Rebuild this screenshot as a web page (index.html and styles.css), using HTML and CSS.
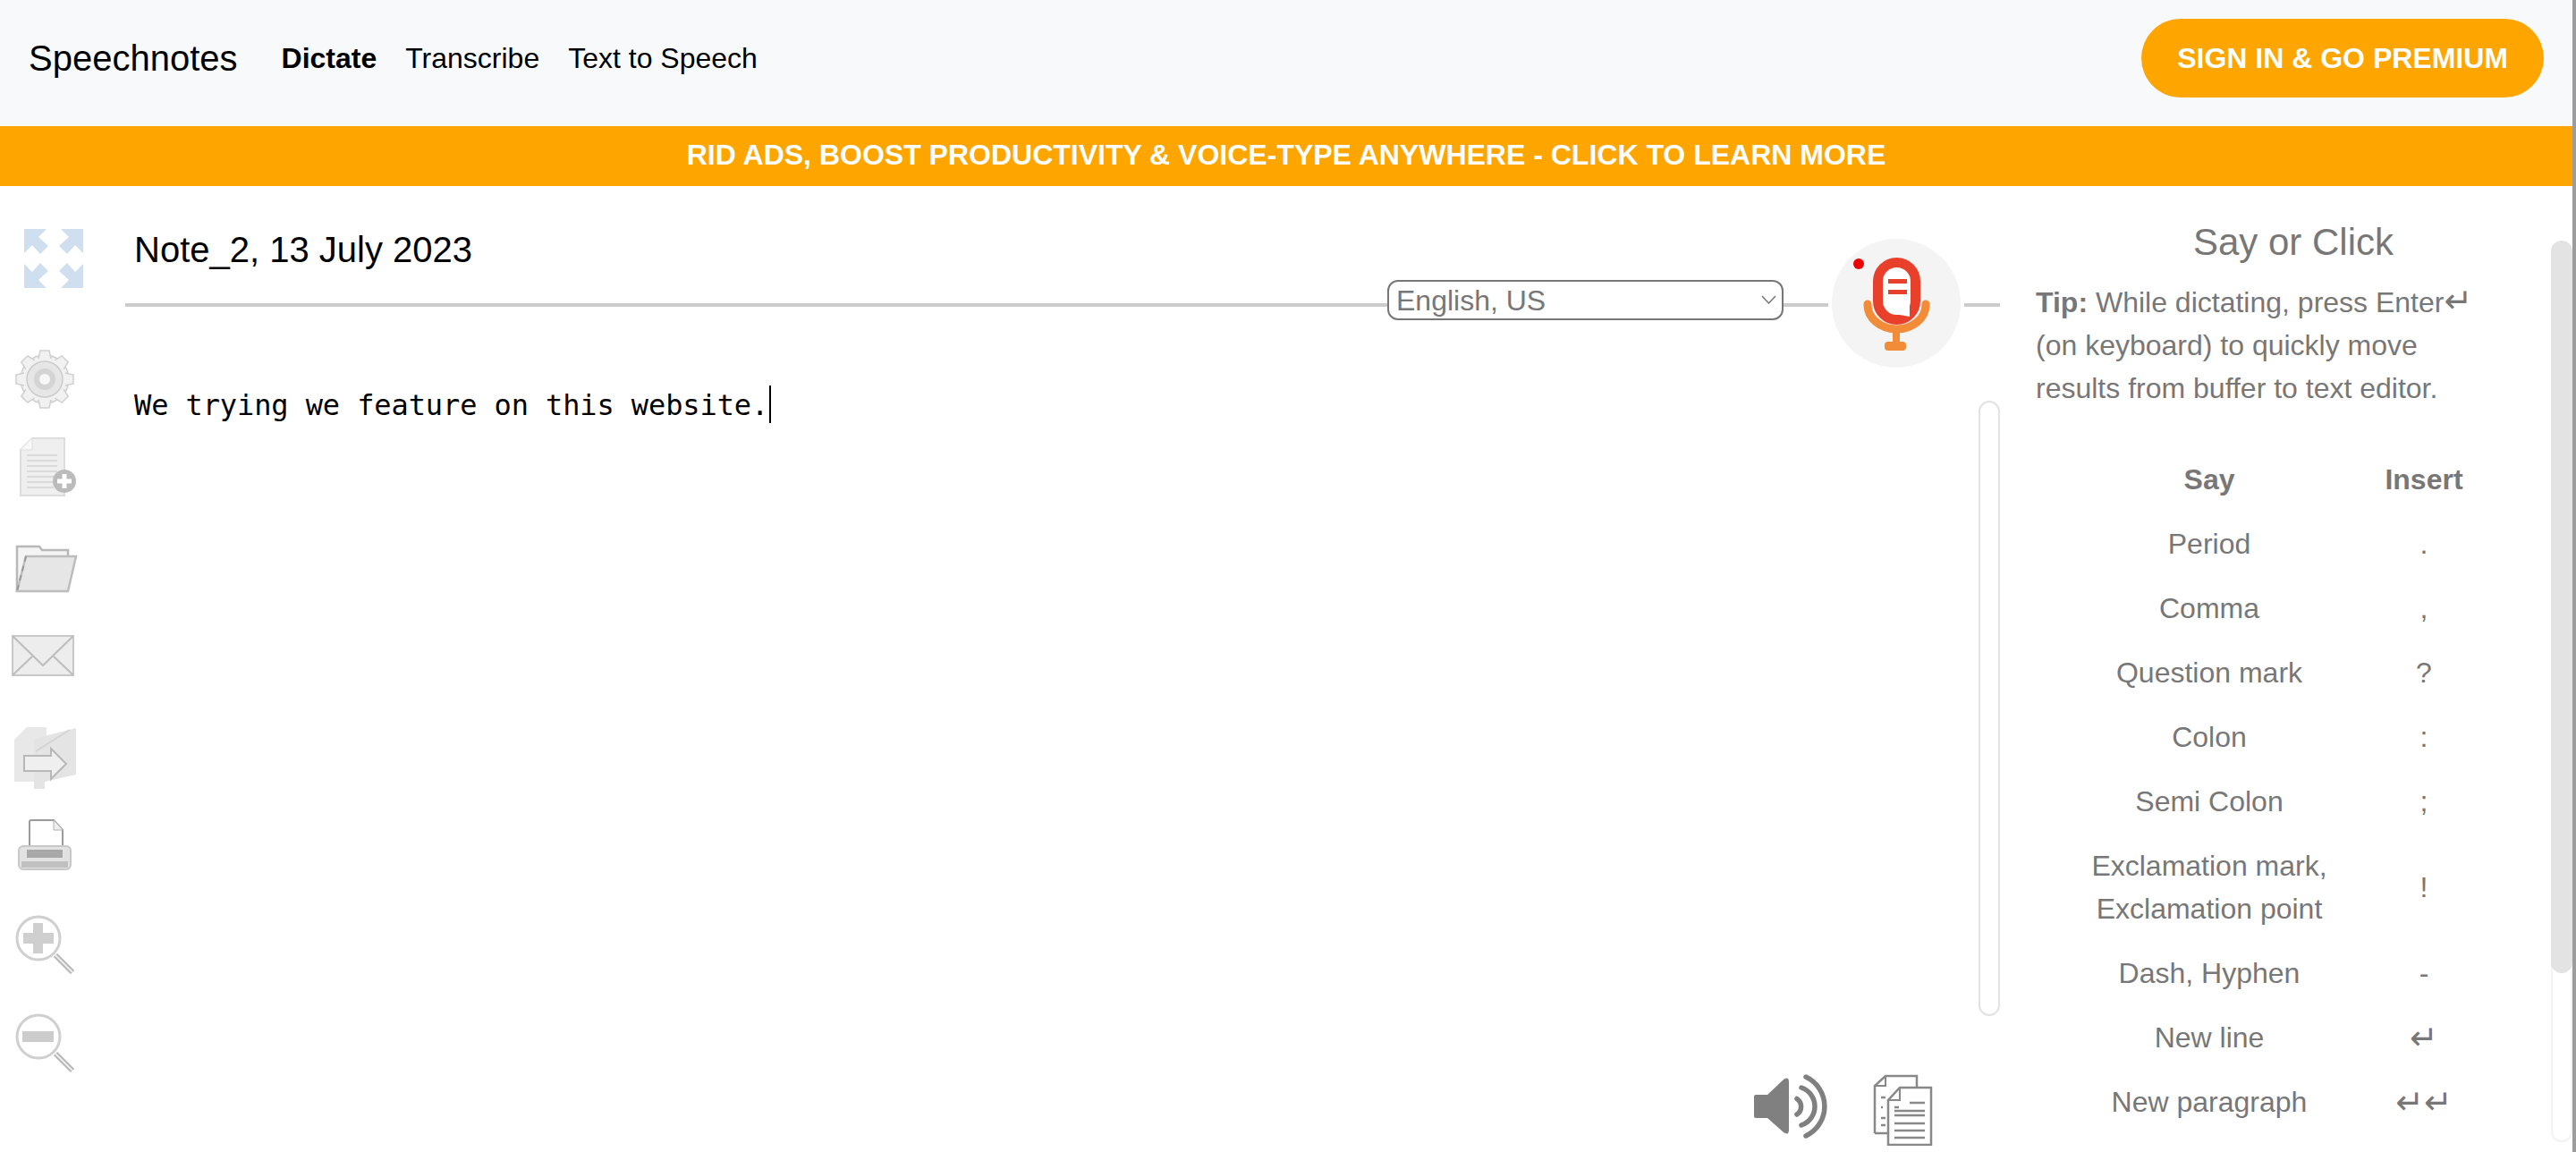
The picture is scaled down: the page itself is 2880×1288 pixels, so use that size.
FILE: index.html
```html
<!DOCTYPE html>
<html>

<head>
  <meta name="viewport" content="width=device-width, initial-scale=1" />
  <link rel="stylesheet" href="styles.css">
  <title>Speechnotes</title>
</head>

<body>
  <div class="page">
    <header class="topbar">
      <div class="brand">Speechnotes</div>
      <nav class="nav">
        <a class="nav-link active">Dictate</a>
        <a class="nav-link">Transcribe</a>
        <a class="nav-link">Text to Speech</a>
      </nav>
      <a class="signin">SIGN IN &amp; GO PREMIUM</a>
    </header>

    <div class="promo">RID ADS, BOOST PRODUCTIVITY &amp; VOICE-TYPE ANYWHERE - CLICK TO LEARN MORE</div>

    <div class="workspace">
      <!-- Left toolbar -->
      <aside class="tools">
        <svg class="tool-expand" width="100" height="66" viewBox="0 0 100 66">
          <defs>
            <polygon id="expand-arrow" points="27,0 52,0 43,9 54,19 45,28 36,18 27,27" fill="#cfdff0" />
          </defs>
          <use href="#expand-arrow" />
          <use href="#expand-arrow" transform="matrix(-1 0 0 1 120 0)" />
          <use href="#expand-arrow" transform="matrix(1 0 0 -1 0 66)" />
          <use href="#expand-arrow" transform="matrix(-1 0 0 -1 120 66)" />
        </svg>

        <svg class="tool tool-gear" width="100" height="66" viewBox="0 0 100 66">
          <defs>
            <path id="gear-tooth" d="M43 10 L45 1 L55 1 L57 10" fill="#f1f1f1" stroke="#cfcfcf" stroke-width="1.5" />
          </defs>
          <circle cx="50" cy="33" r="27" fill="#f1f1f1" stroke="#cfcfcf" stroke-width="1.5" />
          <use href="#gear-tooth" />
          <use href="#gear-tooth" transform="rotate(45 50 33)" />
          <use href="#gear-tooth" transform="rotate(90 50 33)" />
          <use href="#gear-tooth" transform="rotate(135 50 33)" />
          <use href="#gear-tooth" transform="rotate(180 50 33)" />
          <use href="#gear-tooth" transform="rotate(225 50 33)" />
          <use href="#gear-tooth" transform="rotate(270 50 33)" />
          <use href="#gear-tooth" transform="rotate(315 50 33)" />
          <circle cx="50" cy="33" r="20" fill="#e6e6e6" stroke="#cccccc" stroke-width="1.5" />
          <circle cx="50" cy="33" r="12" fill="#d4d4d4" />
          <circle cx="50" cy="33" r="6" fill="#f7f7f7" />
        </svg>

        <svg class="tool tool-doc" width="100" height="67" viewBox="0 0 100 67">
          <path d="M23 14 L36 1 H72 V65 H23 Z" fill="#efefef" stroke="#dddddd" stroke-width="2" />
          <path d="M23 14 H36 V1" fill="#f8f8f8" stroke="#dddddd" />
          <path d="M30 20 H64 M30 26 H64 M30 32 H64 M30 38 H64 M30 44 H60 M30 50 H60 M30 56 H60" stroke="#d4d4d4" stroke-width="1.5" />
          <circle cx="72" cy="49" r="13" fill="#bbbbbb" />
          <path d="M72 41 V57 M64 49 H80" stroke="#ffffff" stroke-width="5" />
        </svg>

        <svg class="tool tool-folder" width="100" height="56" viewBox="0 0 100 56">
          <path d="M19 55 V4 H44 L47 8 H76 V18" fill="#f4f4f4" stroke="#b8b8b8" stroke-width="2.5" />
          <path d="M29 15 H85 L76 54 H19 Z" fill="#e6e6e6" stroke="#bdbdbd" stroke-width="2.5" />
          <path d="M29 15 L19 54" stroke="#999999" stroke-width="2" stroke-dasharray="6 5" />
        </svg>

        <svg class="tool tool-mail" width="100" height="46" viewBox="0 0 100 46">
          <rect x="14" y="1" width="68" height="44" fill="#ededed" stroke="#c8c8c8" stroke-width="2" />
          <path d="M14 1 L48 34 L82 1 M14 45 L37 23 M82 45 L59 23" fill="none" stroke="#bdbdbd" stroke-width="2" />
        </svg>

        <svg class="tool tool-share" width="100" height="70" viewBox="0 0 100 70">
          <path d="M16 15 L30 1 H52 V62 H16 Z" fill="#e8e8e8" />
          <path d="M38 14 L85 2 V54 L50 62 V70 H38 Z" fill="#e4e4e4" />
          <path d="M40 28 L78 4" stroke="#d4d4d4" stroke-width="2" />
          <path d="M27 33 H57 V25 L74 42 L57 59 V50 H27 Z" fill="#efefef" stroke="#b8b8b8" stroke-width="2" />
        </svg>

        <svg class="tool tool-print" width="100" height="57" viewBox="0 0 100 57">
          <path d="M33 31 V3 Q33 1 35 1 H60 L70 12 V31" fill="#ffffff" stroke="#9a9a9a" stroke-width="2" />
          <path d="M60 1 V12 H70" fill="#eeeeee" stroke="#b0b0b0" />
          <rect x="21" y="30" width="58" height="26" rx="5" fill="#e2e2e2" stroke="#c8c8c8" stroke-width="2" />
          <rect x="30" y="34" width="40" height="9" fill="#a8a8a8" />
          <rect x="24" y="47" width="52" height="7" fill="#c0c0c0" />
        </svg>

        <svg class="tool tool-zoomin" width="100" height="66" viewBox="0 0 100 66">
          <path d="M62 45 L81 64" stroke="#b5b5b5" stroke-width="6" />
          <path d="M62 45 L81 64" stroke="#eeeeee" stroke-width="2" />
          <circle cx="43" cy="26" r="24" fill="#ffffff" stroke="#cfcfcf" stroke-width="3" />
          <path d="M37 9 H48 V20 H60 V32 H48 V43 H37 V32 H26 V20 H37 Z" fill="#cfcfcf" />
        </svg>

        <svg class="tool tool-zoomout" width="100" height="67" viewBox="0 0 100 67">
          <path d="M62 45 L81 64" stroke="#b5b5b5" stroke-width="6" />
          <path d="M62 45 L81 64" stroke="#eeeeee" stroke-width="2" />
          <circle cx="43" cy="26" r="24" fill="#ffffff" stroke="#cfcfcf" stroke-width="3" />
          <rect x="25" y="20" width="35" height="12" fill="#cccccc" />
        </svg>
      </aside>

      <!-- Note title, language and mic -->
      <main class="note">
        <div class="note-head">
          <div class="note-title">Note_2, 13 July 2023</div>
          <div class="rule-row">
            <div class="rule rule-grow"></div>
            <div class="lang">
              <select class="lang-select">
                <option>English, US</option>
              </select>
              <svg class="lang-chevron" width="17" height="10" viewBox="0 0 17 10">
                <path d="M1 1 L8.5 9 L16 1" fill="none" stroke="#777" stroke-width="1.5" />
              </svg>
            </div>
            <div class="rule rule-mid"></div>
            <div class="mic">
              <svg width="144" height="144" viewBox="0 0 144 144">
                <circle cx="30" cy="28" r="6" fill="#ee0000" />
                <path d="M40 73 V74 A32.5 27 0 0 0 105 74 V73" fill="none" stroke="#f28c38" stroke-width="9" stroke-linecap="round" />
                <path d="M72 104 V118" stroke="#f28c38" stroke-width="8" />
                <rect x="59" y="115" width="24" height="10" rx="4" fill="#f28c38" />
                <rect x="51.5" y="26.5" width="42" height="64" rx="21" fill="#ffffff" stroke="#e8402a" stroke-width="11" />
                <path d="M63 47.5 H84 M63 59.5 H84" stroke="#e8402a" stroke-width="5" />
                <path d="M87 70 V87 L70 84 Z" fill="#ffffff" />
              </svg>
            </div>
            <div class="rule rule-end"></div>
          </div>
        </div>

        <div class="editor-row">
          <div class="editor">We trying we feature on this website.<span class="caret"></span></div>
          <div class="editor-track"></div>
        </div>

        <div class="actions">
          <svg width="86" height="72" viewBox="0 0 86 72">
            <path d="M0 25 Q0 23 2 23 H15 L33 6 Q39 2 39 9 V62 Q39 69 33 65 L15 49 H2 Q0 49 0 47 Z" fill="#808080" />
            <path d="M48 27.5 A10.6 10.6 0 0 1 48 45" fill="none" stroke="#808080" stroke-width="5.5" stroke-linecap="round" />
            <path d="M53 15 A22.2 22.2 0 0 1 53 57" fill="none" stroke="#808080" stroke-width="5.5" stroke-linecap="round" />
            <path d="M58 3 A36.5 36.5 0 0 1 58 69" fill="none" stroke="#808080" stroke-width="5.5" stroke-linecap="round" />
          </svg>
          <svg width="67" height="80" viewBox="0 0 67 80">
            <path d="M2 66 V13 L14 2 H49 V15" fill="#ffffff" stroke="#888888" stroke-width="2.5" />
            <path d="M2 13 H14 V2" fill="none" stroke="#888888" stroke-width="2" />
            <path d="M2 66 H17" stroke="#888888" stroke-width="2.5" />
            <path d="M9 26 H14 M9 37 H11 M9 49 H14 M9 57 H14" stroke="#888888" stroke-width="2.5" />
            <path d="M17 79 V29 L30 15 H65 V79 Z" fill="#ffffff" stroke="#888888" stroke-width="2.5" />
            <path d="M17 29 H30 V15" fill="none" stroke="#888888" stroke-width="2" />
            <path d="M41 32 H58 M24 37 H29 M24 41 H58 M24 46 H58 M24 55 H58 M24 63 H58 M24 71 H58" stroke="#888888" stroke-width="2.5" />
          </svg>
        </div>
      </main>

      <!-- Voice commands -->
      <section class="panel">
        <div class="panel-body">
          <h2 class="panel-title">Say or Click</h2>
          <p class="tip"><b>Tip:</b> While dictating, press Enter<span class="enter">↵</span> (on keyboard) to quickly move results from buffer to text editor.</p>
          <table class="commands">
            <tr>
              <th class="col-say">Say</th>
              <th class="col-insert">Insert</th>
            </tr>
            <tr><td>Period</td><td>.</td></tr>
            <tr><td>Comma</td><td>,</td></tr>
            <tr><td>Question mark</td><td>?</td></tr>
            <tr><td>Colon</td><td>:</td></tr>
            <tr><td>Semi Colon</td><td>;</td></tr>
            <tr><td>Exclamation mark,<br>Exclamation point</td><td>!</td></tr>
            <tr><td>Dash, Hyphen</td><td>-</td></tr>
            <tr><td>New line</td><td class="enter">↵</td></tr>
            <tr><td>New paragraph</td><td class="enter">↵↵</td></tr>
          </table>
        </div>
        <div class="panel-track">
          <div class="panel-thumb"></div>
        </div>
      </section>
    </div>
  </div>
</body>

</html>
```

FILE: styles.css
```css
html,
body {
  margin: 0;
  height: 100%;
  overflow: hidden;
}

body {
  font-family: "Liberation Sans", Arial, sans-serif;
  background-color: white;
}

.page {
  height: 1288px;
  overflow: hidden;
  border-right: 4px solid #9c9c9c;
}

/* Top bar */
.topbar {
  display: flex;
  align-items: center;
  box-sizing: border-box;
  height: 141px;
  padding: 21px 32px 32px 32px;
  background-color: #f8f9fa;
}

.brand {
  font-size: 40px;
  color: black;
}

.nav {
  display: flex;
  gap: 32px;
  margin-left: 49px;
}

.nav-link {
  font-size: 32px;
  color: black;
}

.nav-link.active {
  font-weight: bold;
}

.signin {
  margin-left: auto;
  padding: 0 40px;
  height: 88px;
  line-height: 88px;
  border-radius: 44px;
  background-color: #ffa500;
  color: white;
  font-size: 32px;
  font-weight: bold;
}

.promo {
  height: 67px;
  line-height: 65px;
  background-color: #ffa500;
  color: white;
  font-size: 32px;
  font-weight: bold;
  text-align: center;
}

/* Main area */
.workspace {
  display: grid;
  grid-template-columns: 140px 2096px 640px;
  height: 1080px;
}

/* Left toolbar */
.tools svg {
  display: block;
}

.tool {
  filter: blur(0.6px);
}

.tool-expand {
  margin-top: 48px;
}

.tool-gear {
  margin-top: 69px;
}

.tool-doc {
  margin-top: 32px;
}

.tool-folder {
  margin-top: 51px;
}

.tool-mail {
  margin-top: 47px;
}

.tool-share {
  margin-top: 56px;
}

.tool-print {
  margin-top: 34px;
}

.tool-zoomin {
  margin-top: 50px;
}

.tool-zoomout {
  margin-top: 44px;
}

/* Note head */
.note-head {
  display: grid;
  padding-top: 59px;
}

.note-title,
.rule-row {
  grid-area: 1 / 1;
}

.note-title {
  margin: -12px 0 0 10px;
  font-size: 40px;
  line-height: 48px;
  color: black;
}

.rule-row {
  display: flex;
  align-items: center;
  height: 144px;
}

.rule {
  height: 4px;
  margin-top: 4px;
  background-color: #cccccc;
}

.rule-grow {
  flex: 1;
}

.rule-mid {
  width: 50px;
  margin-right: 4px;
}

.rule-end {
  width: 40px;
  margin-left: 4px;
}

.lang {
  position: relative;
  width: 443px;
  height: 45px;
  margin-bottom: 7px;
}

.lang-select {
  display: block;
  width: 100%;
  height: 100%;
  box-sizing: border-box;
  padding: 0 0 0 8px;
  appearance: none;
  background-color: white;
  border: 2px solid #777;
  border-radius: 12px;
  color: #777;
  font-family: "Liberation Sans", Arial, sans-serif;
  font-size: 32px;
}

.lang-chevron {
  position: absolute;
  top: 17px;
  right: 8px;
}

.mic {
  width: 144px;
  height: 144px;
  border-radius: 50%;
  background-color: #f4f4f4;
}

.mic svg {
  display: block;
}

/* Editor */
.editor-row {
  display: flex;
  align-items: flex-start;
}

.editor {
  flex: 1;
  margin: 18px 0 0 10px;
  font-family: "DejaVu Sans Mono", monospace;
  font-size: 32px;
  letter-spacing: -0.1px;
  line-height: 48px;
  color: black;
}

.caret {
  display: inline-block;
  width: 2px;
  height: 42px;
  margin-left: 1px;
  vertical-align: -9px;
  background-color: black;
}

.editor-track {
  box-sizing: border-box;
  width: 24px;
  height: 688px;
  margin-top: 37px;
  background-color: white;
  border: 2px solid #e2e2e2;
  border-radius: 12px;
}

.actions {
  display: flex;
  align-items: flex-start;
  justify-content: flex-end;
  gap: 47px;
  margin-top: 65px;
  padding-right: 75px;
}

.actions svg {
  filter: blur(0.4px);
}

/* Right panel */
.panel {
  display: flex;
}

.panel-body {
  width: 616px;
  box-sizing: border-box;
  padding: 39px 0 0 40px;
  color: #777;
}

.panel-title {
  margin: 0;
  font-size: 42px;
  font-weight: normal;
  line-height: 48px;
  text-align: center;
}

.tip {
  max-width: 510px;
  margin: 19px 0 0 0;
  font-size: 32px;
  line-height: 48px;
}

.enter {
  font-family: "DejaVu Sans", sans-serif;
  font-size: 38px;
  line-height: 1;
}

.commands {
  width: 480px;
  margin-top: 42px;
  border-collapse: collapse;
  table-layout: fixed;
  font-size: 32px;
  line-height: 48px;
}

.commands th,
.commands td {
  padding: 12px 0;
  text-align: center;
}

.commands td.enter {
  line-height: 1;
}

.col-say {
  width: 388px;
}

.col-insert {
  width: 92px;
}

.panel-track {
  box-sizing: border-box;
  width: 24px;
  height: 1008px;
  margin-top: 61px;
  border: 2px solid #f3f3f3;
  border-top: 0;
  border-radius: 12px;
}

.panel-thumb {
  height: 819px;
  margin: 0 -2px;
  border-radius: 12px;
  background-color: #e3e3e3;
}
```
